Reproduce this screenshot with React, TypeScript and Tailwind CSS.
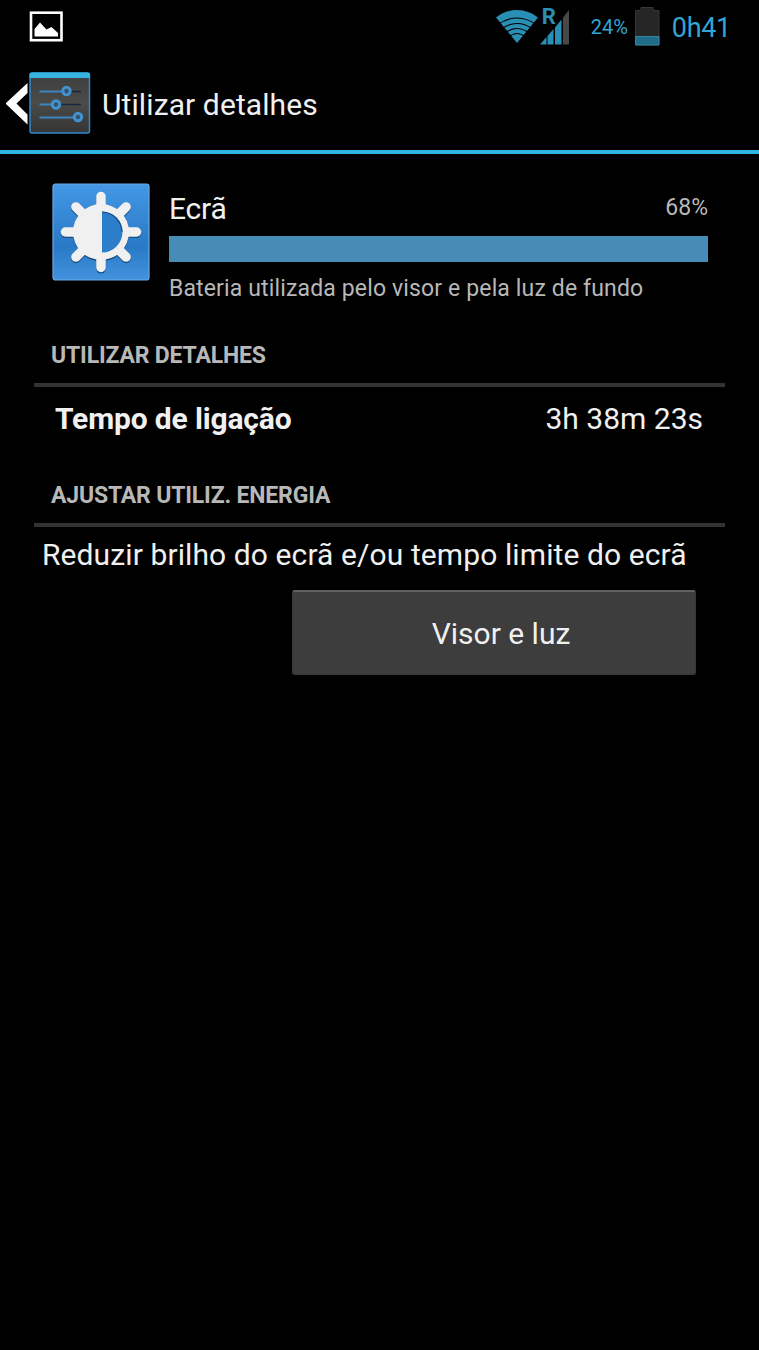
import React from 'react';

const PictureIcon: React.FC = () => (
  <svg width="34" height="31" viewBox="0 0 34 31">
    <rect x="2" y="1.700" width="30.500" height="27.500" fill="none" stroke="#fff" strokeWidth="2.600" />
    <path d="M5.500 25.500V18L11 11.500l6.500 7 5-2.500 6.500 6v3.500z" fill="#fff" />
  </svg>
);

const WifiIcon: React.FC = () => (
  <svg width="44" height="36" viewBox="0 0 44 36">
    <path d="M21 35L0 9.500Q9 2 21 2t21 7.500z" fill="#2a8fb5" />
    <g fill="none" stroke="#000" strokeWidth="1.200">
      <path d="M2 16.500Q11 10 21 10t19 6.500" />
      <path d="M6 20.500Q13 15.500 21 15.500t15 5" />
      <path d="M9 25Q15 20.500 21 20.500t12 4.500" />
      <path d="M12.500 29Q17 25.500 21 25.500t8.500 3.500" />
    </g>
  </svg>
);

const SignalIcon: React.FC = () => (
  <div className="relative h-[35px] w-[30px]">
    <svg className="block" width="30" height="35" viewBox="0 0 30 35">
      <path d="M0 34.500L6.500 27v7.500zM7.500 34.500V26l6-7v15.500zM15 34.500V17.500l6.500-8V34.500z" fill="#2a8fb5" />
      <path d="M23 34.500V7.500L29 0v34.500z" fill="#484848" />
    </svg>
    <span className="absolute left-[2px] top-[-4px] text-[22px] font-bold leading-[22px] text-[#2a8fb5]">R</span>
  </div>
);

const BatteryIcon: React.FC = () => (
  <svg width="25" height="39" viewBox="0 0 25 39">
    <path d="M.5 38V3.500h5.500v-3h12v3h6V38z" fill="#262626" stroke="#373737" />
    <path d="M.5 29.500h23.500v8.500H.5z" fill="#1f6d88" stroke="#38839d" />
  </svg>
);

const BackIcon: React.FC = () => (
  <svg width="23" height="42" viewBox="0 0 23 42">
    <path d="M21.500 0v10L10.500 20.500 21.500 31.500v10L-.5 20.500z" fill="#fff" />
  </svg>
);

const SettingsIcon: React.FC = () => (
  <svg width="62" height="62" viewBox="0 0 62 62">
    <defs>
      <linearGradient id="panel" x1="0" y1="0" x2="0" y2="1">
        <stop offset="0" stopColor="#3d3e3e" />
        <stop offset=".5" stopColor="#4b4b48" />
        <stop offset="1" stopColor="#343534" />
      </linearGradient>
    </defs>
    <rect x="1" y="1" width="59.500" height="60" rx="2" fill="url(#panel)" stroke="#2e88cf" strokeWidth="1.500" />
    <path d="M.5 6V3Q.5.5 3 .5h55.500q2.500 0 2.500 2.500v3z" fill="#36b4df" />
    <path d="M37 19.500h15M27 32.500h25" stroke="#15293e" strokeWidth="1.500" />
    <path d="M10.500 19.500h23M10.500 32.500h13M10.500 45.500h35" stroke="#3a86c2" strokeWidth="2" />
    <g fill="#35506b" stroke="#4391ce" strokeWidth="3">
      <circle cx="37.500" cy="19" r="3.700" />
      <circle cx="27" cy="32.500" r="3.700" />
      <circle cx="49" cy="45" r="3.700" />
    </g>
  </svg>
);

const RAYS = [0, 45, 90, 135, 180, 225, 270, 315];

const BrightnessIcon: React.FC = () => (
  <svg width="98" height="98" viewBox="0 0 98 98">
    <defs>
      <linearGradient id="tile" x1="0" y1="0" x2="0" y2="1">
        <stop offset="0" stopColor="#4498e5" />
        <stop offset=".65" stopColor="#2979c6" />
        <stop offset="1" stopColor="#4392de" />
      </linearGradient>
    </defs>
    <rect x="1" y="1" width="96" height="96" rx="2.500" fill="url(#tile)" stroke="#69a9e3" strokeWidth="1.200" />
    {/* dark copy underneath is the drop shadow */}
    {[{ dy: 1.3, color: '#174d82' }, { dy: 0, color: '#f0f0f0' }].map(({ dy, color }) => (
      <g key={color} transform={`translate(49 ${49 + dy})`}>
        {RAYS.map((angle) => (
          <path key={angle} d="M0-25V-35.500" transform={`rotate(${angle})`} stroke={color} strokeWidth="9.500" strokeLinecap="round" />
        ))}
        <circle r="28" fill={color} />
      </g>
    ))}
    <path d="M50 28.500a20.500 20.500 0 0 1 0 41z" fill="#2c7dca" />
    <path d="M50 29a20.500 20.500 0 0 1 20 20" fill="none" stroke="#174d82" strokeWidth="1.200" />
  </svg>
);

const SectionTitle: React.FC<{ children: React.ReactNode }> = ({ children }) => (
  <h2 className="mx-[34px] h-[50px] border-b-4 border-[#333] pl-[17px] pt-px text-[23px] font-bold leading-[36px] tracking-[-0.17px] text-[#b8b8b8]">
    {children}
  </h2>
);

const App: React.FC = () => {
  return (
    <div className="h-[1350px] w-[759px] overflow-hidden bg-black font-['Roboto',sans-serif] text-[30px] leading-9 text-[#f0f0f0]">
      {/* Status bar */}
      <div className="flex h-[54px] items-start justify-between pl-[29px] pr-[28px]">
        <div className="pt-[11px]"><PictureIcon /></div>
        <div className="flex items-start text-[#33a5d3]">
          <div className="pt-2"><WifiIcon /></div>
          <div className="pt-[10px]"><SignalIcon /></div>
          <span className="ml-[21px] pt-[9px] text-[20px]">24%</span>
          <div className="ml-[7px] pt-[7px]"><BatteryIcon /></div>
          <span className="ml-3 pt-[10px] text-[27px] tracking-[-0.3px]">0h41</span>
        </div>
      </div>

      {/* Action bar */}
      <header className="flex h-[100px] items-start border-b-4 border-[#33b5e5] pl-[6px]">
        <div className="pt-[29px]"><BackIcon /></div>
        <div className="pt-[18px]"><SettingsIcon /></div>
        <h1 className="ml-[11px] pt-[33px] tracking-[0.1px]">Utilizar detalhes</h1>
      </header>

      {/* Usage summary */}
      <section className="flex h-[183px] items-start pl-[52px] pr-[51px] pt-[29px]">
        <BrightnessIcon />
        <div className="ml-[19px] flex-1">
          <div className="flex h-[53px] justify-between pt-2">
            <span className="tracking-[-0.2px]">Ecrã</span>
            <span className="-mt-px text-[23px] text-[#b8b8b8]">68%</span>
          </div>
          <div className="h-[26px] bg-[#468cb6]"></div>
          <p className="pt-[9px] text-[23px] tracking-[0.14px] text-[#b8b8b8]">Bateria utilizada pelo visor e pela luz de fundo</p>
        </div>
      </section>

      <SectionTitle>UTILIZAR DETALHES</SectionTitle>
      <div className="flex h-[90px] justify-between pl-[55px] pr-14 pt-[14px]">
        <span className="font-bold tracking-[-0.15px]">Tempo de ligação</span>
        <span>3h 38m 23s</span>
      </div>

      <SectionTitle>AJUSTAR UTILIZ. ENERGIA</SectionTitle>
      <p className="pl-[42px] pt-[10px] tracking-[0.1px]">Reduzir brilho do ecrã e/ou tempo limite do ecrã</p>
      <button className="ml-[292px] mt-[17px] block h-[85px] w-[404px] rounded-[3px] border border-[#383838] border-t-2 border-t-[#606060] bg-[#3d3d3d] pl-[14px] pt-[2px]">
        Visor e luz
      </button>
    </div>
  );
};

export default App;
